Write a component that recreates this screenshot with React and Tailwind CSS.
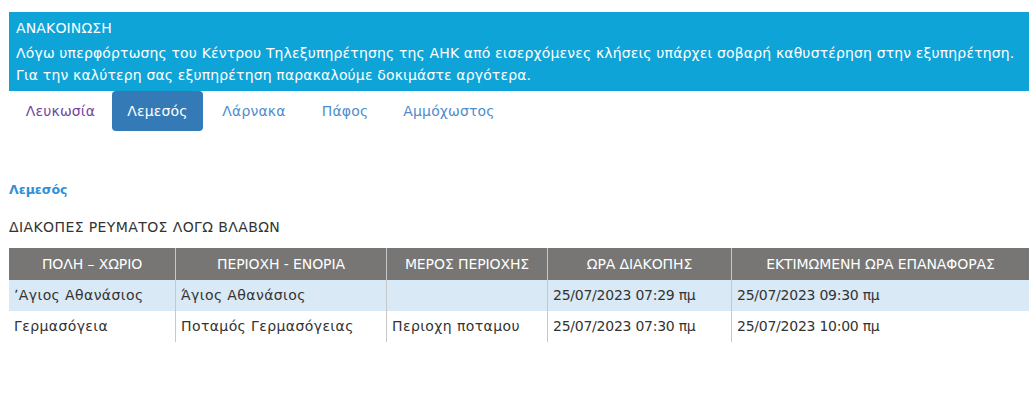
const tabs = [
    { name: "Λευκωσία", w: "w-[103px]", color: "text-[#70479f]" },
    { name: "Λεμεσός", w: "w-[91px]", color: "" },
    { name: "Λάρνακα", w: "w-[102px]", color: "text-[#4f8ccd]" },
    { name: "Πάφος", w: "w-[80px]", color: "text-[#4f8ccd]" },
    { name: "Αμμόχωστος", w: "w-[128px]", color: "text-[#4f8ccd]" }
];

const rows = [
    ["\u02BCΑγιος Αθανάσιος", "Άγιος Αθανάσιος", "", "25/07/2023 07:29 πμ", "25/07/2023 09:30 πμ"],
    ["Γερμασόγεια", "Ποταμός Γερμασόγειας", "Περιοχη ποταμου", "25/07/2023 07:30 πμ", "25/07/2023 10:00 πμ"]
];

const headers = ["ΠΟΛΗ – ΧΩΡΙΟ", "ΠΕΡΙΟΧΗ - ΕΝΟΡΙΑ", "ΜΕΡΟΣ ΠΕΡΙΟΧΗΣ", "ΩΡΑ ΔΙΑΚΟΠΗΣ", "ΕΚΤΙΜΩΜΕΝΗ ΩΡΑ ΕΠΑΝΑΦΟΡΑΣ"];
const widths = ["w-[166px]", "w-[211px]", "w-[161px]", "w-[184px]", "w-[298px]"];

const App = () => {
    return (
        <div className="bg-white min-h-screen pt-3 pl-[9px] pr-[7px] text-[#333] font-['DejaVu_Sans',sans-serif]">

            {/* ANNOUNCEMENT */}
            <div className="bg-[#0ea4d8] text-white px-[7px] pt-[5px] h-[79px] text-[14px] leading-[22px] tracking-[0.15px]">
                <div className="mb-[3px]">ΑΝΑΚΟΙΝΩΣΗ</div>
                <div>Λόγω υπερφόρτωσης του Κέντρου Τηλεξυπηρέτησης της ΑΗΚ από εισερχόμενες κλήσεις υπάρχει σοβαρή καθυστέρηση στην εξυπηρέτηση.</div>
                <div>Για την καλύτερη σας εξυπηρέτηση παρακαλούμε δοκιμάστε αργότερα.</div>
            </div>

            {/* TABS */}
            <div className="flex h-[40px] text-[14px] tracking-[0.15px]">
                {tabs.map((t, i) => (
                    <div
                        key={t.name}
                        className={`${t.w} flex items-center justify-center ${
                            i === 1 ? "bg-[#337ab7] text-white rounded-[4px]" : t.color
                        }`}
                    >
                        {t.name}
                    </div>
                ))}
            </div>

            <div className="mt-[49px] text-[12.5px] leading-[20px] font-bold text-[#2f8fd8]">Λεμεσός</div>

            <div className="mt-[17px] text-[14px] leading-[20px] tracking-[0.4px]">ΔΙΑΚΟΠΕΣ ΡΕΥΜΑΤΟΣ ΛΟΓΩ ΒΛΑΒΩΝ</div>

            {/* TABLE */}
            <div className="mt-[11px] text-[14px]">
                <div className="flex bg-[#777674] text-white h-[32px] tracking-[-0.1px]">
                    {headers.map((h, i) => (
                        <div
                            key={h}
                            className={`${widths[i]} shrink-0 flex items-center justify-center ${i > 0 ? "border-l border-[#c8c8c8]" : ""}`}
                        >
                            {h}
                        </div>
                    ))}
                </div>
                {rows.map((r, ri) => (
                    <div key={ri} className={`flex h-[31px] ${ri === 0 ? "bg-[#d9e9f5]" : "bg-white"}`}>
                        {r.map((c, ci) => (
                            <div
                                key={ci}
                                className={`${widths[ci]} shrink-0 flex items-center px-[5px] whitespace-nowrap ${
                                    ci > 2 ? "tracking-[-0.25px]" : "tracking-[0.4px]"
                                } ${ci > 0 ? "border-l border-[#c8c8c8]" : ""}`}
                            >
                                {c}
                            </div>
                        ))}
                    </div>
                ))}
            </div>
        </div>
    );
};

export default App;
